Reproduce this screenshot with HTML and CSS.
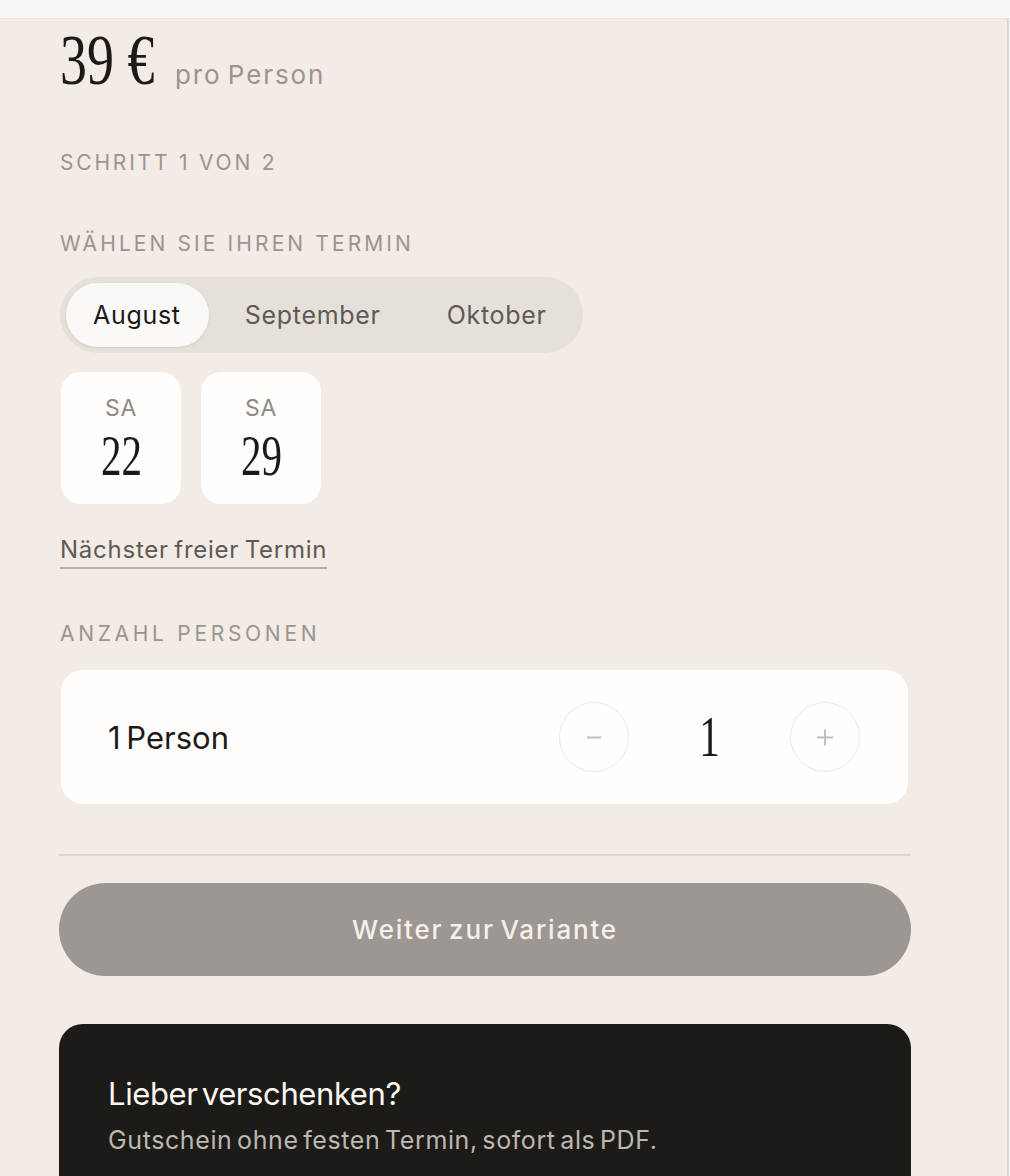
FILE: index.html
```html
<!DOCTYPE html>
<html lang="de">
<head>
<meta charset="utf-8">
<link rel="stylesheet" href="styles.css">
</head>
<body>
<div class="topbar"></div>
<div class="panel">
  <div class="content">
    <div class="price"><span class="amount-box"><span class="amount">39 €</span></span><span class="per">pro Person</span></div>
    <div class="label step">SCHRITT 1 VON 2</div>
    <div class="label label-termin">WÄHLEN SIE IHREN TERMIN</div>
    <div class="tabs">
      <div class="tab active">August</div>
      <div class="tab">September</div>
      <div class="tab">Oktober</div>
    </div>
    <div class="dates">
      <div class="date"><span class="dow">SA</span><span class="day">22</span></div>
      <div class="date"><span class="dow">SA</span><span class="day">29</span></div>
    </div>
    <a class="next-link">Nächster freier Termin</a>
    <div class="label label-persons">ANZAHL PERSONEN</div>
    <div class="persons">
      <span class="persons-text">1 Person</span>
      <div class="stepper">
        <span class="circle" aria-label="weniger"><svg width="16" height="16" viewBox="0 0 16 16"><path d="M1 8.5H15" stroke="#c4bfba" stroke-width="2"/></svg></span>
        <span class="count">1</span>
        <span class="circle" aria-label="mehr"><svg width="18" height="18" viewBox="0 0 18 18"><path d="M1 9.5H17M9 1.5V17.5" stroke="#c4bfba" stroke-width="2"/></svg></span>
      </div>
    </div>
    <hr class="divider">
    <div class="cta">Weiter zur Variante</div>
    <div class="gift">
      <div class="gift-title">Lieber verschenken?</div>
      <div class="gift-sub">Gutschein ohne festen Termin, sofort als PDF.</div>
    </div>
  </div>
</div>
</body>
</html>
```
FILE: styles.css
```css
html, body {
  margin: 0;
  padding: 0;
  background: #f9f8f6;
  height: 1176px;
  overflow: hidden;
}
body {
  font-family: "Inter", "Noto Sans", sans-serif;
  color: #1b1a17;
}
.topbar {
  height: 18px;
  background: #f7f7f5;
  border-bottom: 1px solid #e9e5e1;
}
.panel {
  width: 1009px;
  background: #f2ebe6;
  border-right: 2px solid #ddd6d0;
  box-sizing: border-box;
  height: 1157px;
}
.content {
  width: 852px;
  margin-left: 59px;
  display: flex;
  flex-direction: column;
  align-items: flex-start;
}
.price {
  display: flex;
  align-items: baseline;
  margin-top: 1px;
  white-space: nowrap;
}
.amount-box {
  display: inline-block;
  width: 115px;
  margin-left: 1px;
}
.amount {
  display: inline-block;
  font-family: "Liberation Serif", "DejaVu Serif", serif;
  font-size: 71px;
  line-height: 80px;
  color: #1b1a17;
  transform: scaleX(0.76);
  transform-origin: left center;
}
.per {
  font-size: 26px;
  color: #9a948e;
  letter-spacing: 1.9px;
  word-spacing: -3px;
}
.label {
  font-size: 21px;
  line-height: 24px;
  letter-spacing: 3px;
  color: #9a948e;
  margin-left: 1px;
}
.step { margin-top: 51px; letter-spacing: 2.8px; }
.label-termin { margin-top: 57px; letter-spacing: 3.1px; }
.tabs {
  margin-top: 21px;
  display: flex;
  gap: 6px;
  background: #e6e0db;
  border-radius: 38px;
  padding: 6px;
  margin-left: 1px;
}
.tab {
  font-size: 25px;
  color: #5e5954;
  height: 64px;
  line-height: 64px;
  padding: 0 30px;
  border-radius: 32px;
  letter-spacing: 0.7px;
}
.tab.active {
  background: #fbf9f7;
  color: #1b1a17;
  box-shadow: 0 1px 3px rgba(60,40,20,0.10);
  padding: 0 28px 0 27px;
}
.dates {
  margin-top: 19px;
  margin-left: 2px;
  display: flex;
  gap: 20px;
}
.date {
  width: 120px;
  height: 132px;
  background: #fffefd;
  border-radius: 20px;
  display: flex;
  flex-direction: column;
  align-items: center;
  box-sizing: border-box;
  padding-top: 24px;
}
.dow {
  font-size: 23px;
  line-height: 24px;
  color: #8f8984;
  letter-spacing: 0.6px;
}
.day {
  display: inline-block;
  font-family: "Liberation Serif", "DejaVu Serif", serif;
  font-size: 57px;
  line-height: 60px;
  margin-top: 6px;
  transform: scaleX(0.72);
}
.next-link {
  margin-top: 32px;
  font-size: 24px;
  line-height: 28px;
  color: #5e5954;
  letter-spacing: 0.75px;
  word-spacing: -2px;
  border-bottom: 2px solid #b3ada7;
  padding-bottom: 3px;
  margin-left: 1px;
}
.label-persons { margin-top: 53px; letter-spacing: 3.7px; }
.persons {
  margin-top: 24px;
  margin-left: 2px;
  width: 847px;
  height: 134px;
  background: #fffefd;
  border-radius: 22px;
  box-sizing: border-box;
  display: flex;
  align-items: center;
  justify-content: space-between;
  padding: 0 48px 0 47px;
}
.persons-text {
  font-size: 31px;
  letter-spacing: 0;
  word-spacing: -3px;
  color: #1b1a17;
}
.stepper {
  display: flex;
  align-items: center;
}
.circle {
  width: 70px;
  height: 70px;
  border: 1px solid #ece6e1;
  border-radius: 50%;
  display: flex;
  align-items: center;
  justify-content: center;
  box-sizing: border-box;
}
.count {
  display: inline-block;
  width: 161px;
  text-align: center;
  font-family: "Liberation Serif", "DejaVu Serif", serif;
  font-size: 57px;
  line-height: 60px;
  transform: scaleX(0.72);
}
.divider {
  width: 852px;
  margin: 50px 0 0 0;
  border: 0;
  border-top: 2px solid #ddd6d0;
  height: 0;
}
.cta {
  margin-top: 27px;
  width: 852px;
  height: 93px;
  border-radius: 47px;
  background: #9c9792;
  color: #f6f0ea;
  font-size: 26px;
  font-weight: 500;
  letter-spacing: 1.8px;
  word-spacing: -3px;
  display: flex;
  align-items: center;
  justify-content: center;
}
.gift {
  margin-top: 48px;
  width: 852px;
  height: 200px;
  border-radius: 24px;
  background: #1c1b17;
  box-sizing: border-box;
  padding: 52px 49px;
}
.gift-title {
  color: #fbf8f4;
  font-size: 31px;
  line-height: 36px;
  letter-spacing: -0.4px;
  word-spacing: -4px;
}
.gift-sub {
  margin-top: 13px;
  color: #bdb8b2;
  font-size: 25px;
  line-height: 30px;
  letter-spacing: 0.6px;
  word-spacing: -3px;
}
```
